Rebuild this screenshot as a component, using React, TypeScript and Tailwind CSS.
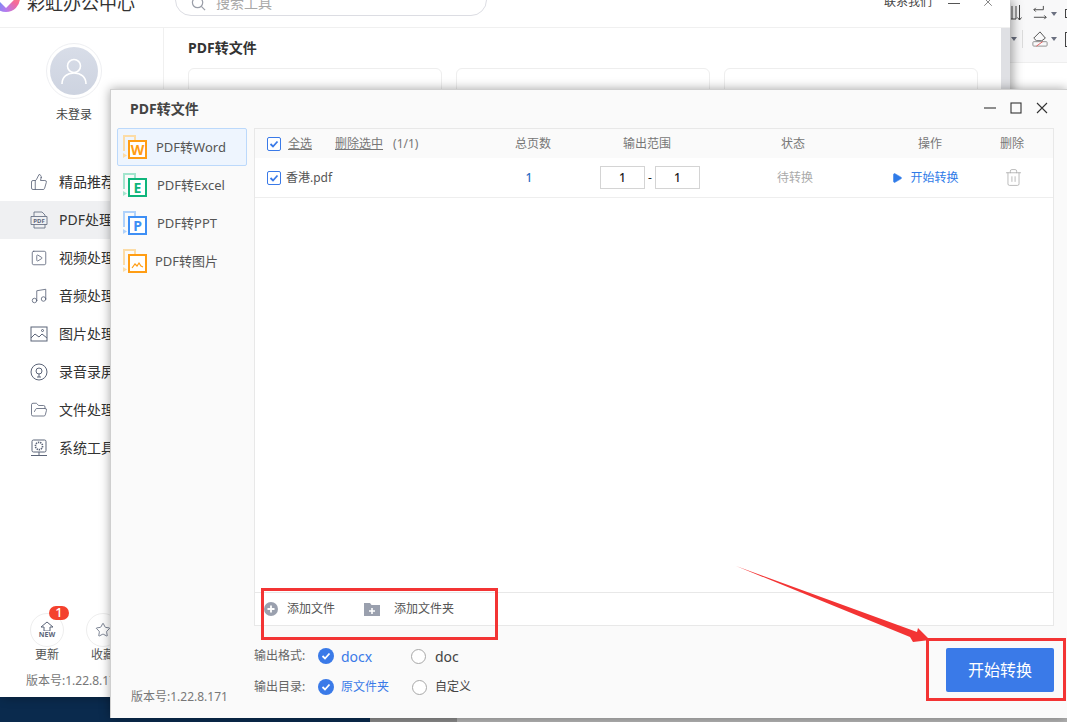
import { FolderOpen, Music, Play, SquarePlay, Star, ThumbsUp, Trash2, X } from "lucide-react";
import type { ReactNode } from "react";

const menuIcon = "h-[18px] w-[18px] text-[#5b6478]";

function PdfIcon() {
  return (
    <svg viewBox="0 0 18 18" className="h-[18px] w-[18px]" fill="none" stroke="#5b6478" strokeWidth="0.8">
      <path d="M4 5V1h8l3 3v1M1 5.500h16v8H1zM4 13.500V17h11v-3.500" />
      <text x="9" y="12" textAnchor="middle" fontSize="6" fontWeight="700" fill="#5b6478" stroke="none">
        PDF
      </text>
    </svg>
  );
}

function ImageIcon() {
  return (
    <svg viewBox="0 0 18 18" className="h-[18px] w-[18px]" fill="none" stroke="#5b6478" strokeWidth="1">
      <rect x="1" y="2" width="16" height="14" />
      <path d="M1 13l4-4 4 3 3-3 5 4" />
      <circle cx="12.500" cy="5.500" r="1" />
    </svg>
  );
}

function RecordIcon() {
  return (
    <svg viewBox="0 0 18 18" className="h-[18px] w-[18px]" fill="none" stroke="#5b6478" strokeWidth="1">
      <circle cx="9" cy="9" r="8" />
      <circle cx="9" cy="8" r="3" />
      <path d="M9 11v3M7 14h4" />
    </svg>
  );
}

function SystemIcon() {
  return (
    <svg viewBox="0 0 18 18" className="h-[18px] w-[18px]" fill="none" stroke="#5b6478" strokeWidth="1">
      <rect x="2" y="1" width="14" height="12" rx="1.500" />
      <circle cx="9" cy="7" r="3.600" strokeDasharray="1.400 0.800" strokeWidth="1.600" />
      <path d="M9 13v3M1 16.500h16" />
    </svg>
  );
}

const menu: { label: string; icon: ReactNode; active?: boolean }[] = [
  { label: "精品推荐", icon: <ThumbsUp className={menuIcon} strokeWidth={1.1} /> },
  { label: "PDF处理", icon: <PdfIcon />, active: true },
  { label: "视频处理", icon: <SquarePlay className={menuIcon} strokeWidth={1.1} /> },
  { label: "音频处理", icon: <Music className={menuIcon} strokeWidth={1.1} /> },
  { label: "图片处理", icon: <ImageIcon /> },
  { label: "录音录屏", icon: <RecordIcon /> },
  { label: "文件处理", icon: <FolderOpen className={menuIcon} strokeWidth={1.1} /> },
  { label: "系统工具", icon: <SystemIcon /> },
];

function DocIcon({ color, light, letter }: { color: string; light: string; letter?: string }) {
  return (
    <svg viewBox="0 0 24 24" className="h-6 w-6 shrink-0" fill="none">
      <path d="M1 16V1h11v5" stroke={light} strokeWidth="2" />
      <path d="M0 18l4 2.500L0 23z" fill={light} />
      <rect x="6" y="6" width="17" height="17" fill="#fff" stroke={color} strokeWidth="2" />
      {letter ? (
        <text x="14.500" y="20" textAnchor="middle" fontSize="14" fontWeight="700" fill={color}>
          {letter}
        </text>
      ) : (
        <path d="M9 19l3-4 2 2 2-3 2 3 2 1" stroke={color} strokeWidth="1.200" />
      )}
    </svg>
  );
}

const tabs = [
  { label: "PDF转Word", color: "#ff9d14", light: "#fcdca6", letter: "W", gap: "ml-[9px]", active: true },
  { label: "PDF转Excel", color: "#0fb57b", light: "#a3e5cd", letter: "E", gap: "ml-[10px]" },
  { label: "PDF转PPT", color: "#3e8ff5", light: "#b0d2fb", letter: "P", gap: "ml-[10px]" },
  { label: "PDF转图片", color: "#ff9d14", light: "#fcdca6", gap: "ml-2" },
];

function CheckBox() {
  return (
    <span className="flex h-[14px] w-[14px] shrink-0 items-center justify-center rounded-[2px] border border-[#3a7ae8] bg-white">
      <svg viewBox="0 0 12 12" className="h-3 w-3" fill="none" stroke="#3a7ae8" strokeWidth="1.800">
        <path d="M2.500 6l2.500 2.500 4.500-5" />
      </svg>
    </span>
  );
}

function RadioOn() {
  return (
    <span className="flex h-4 w-4 shrink-0 items-center justify-center rounded-full bg-[#3a7ae8]">
      <svg viewBox="0 0 12 12" className="h-3 w-3" fill="none" stroke="#fff" strokeWidth="1.800">
        <path d="M2.500 6l2.500 2.500 4.500-5" />
      </svg>
    </span>
  );
}

function RadioOff() {
  return <span className="h-[15px] w-[15px] shrink-0 rounded-full border border-[#a8a8a8] bg-white" />;
}

function RangeInput() {
  return (
    <span className="flex h-[23px] w-[45px] items-center justify-center border border-[#d4d4d4] bg-white text-[12px] font-medium text-[#222]">
      1
    </span>
  );
}

export default function App() {
  return (
    <div className="relative h-[722px] w-[1067px] overflow-hidden bg-[#06213f] font-['Noto_Sans','Noto_Sans_CJK_SC',sans-serif] text-[12px] text-[#444]">
      {/* back window + other app toolbar */}
      <div className="flex h-[697px]">
        <div className="relative z-10 flex h-full w-[1010px] shrink-0 flex-col bg-white shadow-[3px_0_10px_rgba(0,0,0,0.35)]">
          <header className="flex h-[28px] shrink-0 items-start overflow-hidden border-b border-[#f0f0f0]">
            <div className="-mt-[16px] -ml-[8px] flex h-7 w-7 shrink-0 items-center justify-center rounded-full bg-[conic-gradient(#ffd76a,#ff8d6e,#f46a9b,#b57bee,#6f8cf5,#f6a23c,#ffd76a)]">
              <span className="h-[14px] w-[14px] rotate-45 bg-white" />
            </div>
            <span className="-mt-[11px] ml-[7px] text-[18px] leading-[28px] text-[#333]">彩虹办公中心</span>
            <div className="-mt-[28px] ml-[40px] flex h-[44px] w-[312px] items-end gap-[10px] rounded-[16px] border border-[#dcdde3] pb-[2px] pl-[15px]">
              <svg viewBox="0 0 16 16" className="mb-[2px] h-[15px] w-[15px]" fill="none" stroke="#9a9ea8" strokeWidth="1.300">
                <circle cx="7" cy="7" r="5.500" />
                <path d="M11 11l4 4" />
              </svg>
              <span className="text-[14px] leading-5 text-[#a8a8a8]">搜索工具</span>
            </div>
            <span className="-mt-[6px] ml-auto text-[12px] leading-4 text-[#444]">联系我们</span>
            <svg viewBox="0 0 12 1" className="mt-[3px] ml-[16px] h-px w-3 shrink-0">
              <path d="M0 .5h12" stroke="#555" />
            </svg>
            <X className="-mt-[5px] mr-[15px] ml-[21px] h-[14px] w-[14px] text-[#555]" strokeWidth={1.2} />
          </header>

          <div className="flex min-h-0 flex-1">
            <aside className="flex w-[164px] shrink-0 flex-col border-r border-[#f0f0f0]">
              <div className="mt-[15px] ml-[46px] flex h-[56px] w-[56px] items-center justify-center rounded-full border border-[#eeeff2]">
                <div className="flex h-12 w-12 items-center justify-center rounded-full bg-gradient-to-b from-[#d8dde8] to-[#cdd3e0]">
                  <svg viewBox="0 0 28 28" className="h-7 w-7" fill="none" stroke="#fff" strokeWidth="1.600">
                    <circle cx="14" cy="9" r="6.500" />
                    <path d="M2 27c0-7 5-11 12-11s12 4 12 11" />
                  </svg>
                </div>
              </div>
              <div className="mt-2 w-[148px] text-center leading-4 text-[#444]">未登录</div>
              <nav className="mt-[40px] flex flex-col">
                {menu.map((m) => (
                  <div
                    key={m.label}
                    className={`flex h-[38px] items-center gap-[11px] pb-px pl-[30px] text-[14px] text-[#333] ${m.active ? "bg-[#eff0f2]" : ""}`}
                  >
                    <span className="flex w-[18px] justify-center">{m.icon}</span>
                    <span className="whitespace-nowrap">{m.label}</span>
                  </div>
                ))}
              </nav>
              <div className="mt-auto flex pl-[30px]">
                <div className="flex w-[34px] flex-col items-center">
                  <div className="relative flex h-[34px] w-[34px] flex-col items-center justify-center rounded-full border border-[#eeeeee]">
                    <svg viewBox="0 0 16 10" className="h-[10px] w-4" fill="none" stroke="#5b6478" strokeWidth="1">
                      <path d="M8 1L2 6h3v4h6V6h3z" />
                    </svg>
                    <span className="text-[7px] leading-[8px] font-bold text-[#5b6478]">NEW</span>
                    <span className="absolute -top-[8px] left-[18px] flex h-[14px] w-5 items-center justify-center rounded-full bg-[#f4412e] text-[13px] font-medium text-white">
                      1
                    </span>
                  </div>
                  <span className="leading-4 text-[#555]">更新</span>
                </div>
                <div className="ml-[22px] flex w-[34px] flex-col items-center">
                  <div className="flex h-[34px] w-[34px] items-center justify-center rounded-full border border-[#eeeeee]">
                    <Star className="h-4 w-4 text-[#5b6478]" strokeWidth={1.2} />
                  </div>
                  <span className="leading-4 whitespace-nowrap text-[#555]">收藏</span>
                </div>
              </div>
              <div className="mt-[10px] mb-[8px] pl-[26px] leading-4 whitespace-nowrap text-[#777]">版本号:1.22.8.171</div>
            </aside>
            <main className="min-w-0 flex-1 pt-[10px] pl-[24px]">
              <h2 className="text-[14px] leading-5 font-bold text-[#333]">PDF转文件</h2>
              <div className="mt-[10px] flex gap-[14px]">
                <div className="h-[200px] w-[254px] rounded-[6px] border border-[#eeeeee]" />
                <div className="h-[200px] w-[254px] rounded-[6px] border border-[#eeeeee]" />
                <div className="h-[200px] w-[254px] rounded-[6px] border border-[#eeeeee]" />
              </div>
            </main>
            <div className="w-[9px] shrink-0 bg-[#dfe0e4]" />
          </div>
        </div>

        <div className="flex-1 overflow-hidden bg-white">
          <div className="h-[63px] w-[80px] border-b border-[#eeeeee] bg-[#f8f8f9]">
            <div className="flex h-[24px] items-end">
              <svg viewBox="0 0 12 18" className="mb-[2px] h-[18px] w-3 shrink-0" fill="none" stroke="#444" strokeWidth="1">
                <path d="M2 2v13M6 2v13h-5M9.500 1v15M7.500 13.500l2 2.500 2-2.500" />
              </svg>
              <svg viewBox="0 0 18 18" className="mb-[2px] ml-[10px] h-[17px] w-[17px] shrink-0" fill="none" stroke="#444" strokeWidth="1">
                <path d="M12 1v4H2M4 3L2 5l2 2M2 13h13M13 11l2 2-2 2" />
              </svg>
              <span className="mb-[8px] ml-[2px] h-0 w-0 border-x-[3px] border-t-[4px] border-x-transparent border-t-[#6b7080]" />
              <span className="mb-[6px] ml-[8px] h-[9px] w-[10px] shrink-0 border border-[#444]" />
            </div>
            <div className="mt-[6px] flex items-center">
              <span className="ml-[1px] h-0 w-0 border-x-[3px] border-t-[4px] border-x-transparent border-t-[#6b7080]" />
              <span className="ml-[5px] h-[18px] w-px bg-[#dddddd]" />
              <svg viewBox="0 0 18 18" className="ml-[9px] h-[16px] w-[16px] shrink-0" fill="none" stroke="#444" strokeWidth="1">
                <path d="M2 8l7-7 6 7-4 3H5z" />
                <rect x="1" y="12" width="16" height="5" rx="1" stroke="#888" />
                <path d="M5 17l7-5" stroke="#e45050" />
              </svg>
              <span className="ml-[3px] h-0 w-0 border-x-[3px] border-t-[4px] border-x-transparent border-t-[#6b7080]" />
              <span className="ml-[8px] h-[15px] w-[10px] shrink-0 border border-[#444]" />
            </div>
          </div>
        </div>
      </div>

      {/* strip under the windows */}
      <div className="flex h-[25px]">
        <div className="w-[370px] bg-[#0a2a4d]" />
        <div className="w-[87px] bg-[#8a8a8a]" />
        <div className="flex-1 bg-[#b4b4b4]" />
      </div>

      {/* dialog */}
      <div className="absolute top-[89px] left-[110px] z-20 flex h-[629px] w-[957px] flex-col border-t border-l border-[#cfcfcf] bg-[#fafafa] shadow-[0_0_10px_rgba(0,0,0,0.35)]">
        <div className="flex h-[38px] shrink-0 items-center pb-[2px] pl-[19px]">
          <span className="text-[14px] font-bold text-[#444]">PDF转文件</span>
          <div className="ml-auto flex items-center gap-[14px] pr-[19px]">
            <svg viewBox="0 0 12 12" className="h-3 w-3" fill="none" stroke="#333" strokeWidth="1.100">
              <path d="M0 6h12" />
            </svg>
            <svg viewBox="0 0 12 12" className="h-3 w-3" fill="none" stroke="#333" strokeWidth="1.100">
              <rect x="1" y="1" width="10" height="10" />
            </svg>
            <svg viewBox="0 0 12 12" className="h-3 w-3" fill="none" stroke="#333" strokeWidth="1.100">
              <path d="M1 1l10 10M11 1L1 11" />
            </svg>
          </div>
        </div>

        <div className="flex h-[498px] shrink-0">
          <div className="w-[143px] shrink-0 pl-[6px]">
            {tabs.map((t) => (
              <div
                key={t.label}
                className={`flex h-[38px] w-[130px] items-center rounded-[2px] border pl-[5px] text-[13px] text-[#555] ${t.active ? "border-[#bcd9fb] bg-[#eef5fe]" : "border-transparent"}`}
              >
                <DocIcon color={t.color} light={t.light} letter={t.letter} />
                <span className={`${t.gap} pt-px whitespace-nowrap`}>{t.label}</span>
              </div>
            ))}
          </div>
          <section className="flex w-[800px] shrink-0 flex-col border border-[#e8e8e8] bg-white">
            <div className="grid h-[29px] shrink-0 grid-cols-[243px_70px_158px_134px_140px_24px] items-center bg-[#fafafa] text-[#777]">
              <div className="flex items-center pl-[12px]">
                <CheckBox />
                <span className="ml-[7px] underline">全选</span>
                <span className="ml-[23px] underline">删除选中</span>
                <span className="ml-[10px]">(1/1)</span>
              </div>
              <span className="text-center">总页数</span>
              <span className="text-center">输出范围</span>
              <span className="text-center">状态</span>
              <span className="text-center">操作</span>
              <span className="text-center">删除</span>
            </div>
            <div className="grid h-[40px] shrink-0 grid-cols-[243px_70px_158px_134px_140px_24px] items-center border-b border-[#eeeeee]">
              <div className="flex items-center pl-[12px]">
                <CheckBox />
                <span className="ml-[5px] text-[#555]">香港.pdf</span>
              </div>
              <span className="pr-[8px] text-center font-medium text-[#2f6fc4]">1</span>
              <div className="flex items-center justify-center pl-[6px] text-[#222]">
                <RangeInput />
                <span className="w-[10px] text-center">-</span>
                <RangeInput />
              </div>
              <span className="pl-[4px] text-center text-[#aaaaaa]">待转换</span>
              <div className="flex items-center justify-center gap-[7px] pr-[10px] text-[#2f7be8]">
                <Play className="h-[12px] w-[12px] fill-[#2f7be8]" strokeWidth={1} />
                <span>开始转换</span>
              </div>
              <div className="flex justify-center pl-[2px]">
                <Trash2 className="h-[19px] w-[19px] text-[#aaaaaa]" strokeWidth={1} />
              </div>
            </div>
            <div className="flex-1" />
            <div className="flex h-[33px] shrink-0 items-center border-t border-[#e8e8e8] pl-[9px] text-[#555]">
              <svg viewBox="0 0 14 14" className="h-[14px] w-[14px]">
                <circle cx="7" cy="7" r="7" fill="#9aa0ae" />
                <path d="M7 3.500v7M3.500 7h7" stroke="#fff" strokeWidth="1.800" />
              </svg>
              <span className="ml-[9px]">添加文件</span>
              <svg viewBox="0 0 16 14" className="ml-[29px] h-[14px] w-4">
                <path d="M0 1h6l1.500 2H16v11H0z" fill="#9aa0ae" />
                <path d="M8 6v6M5 9h6" stroke="#fff" strokeWidth="1.600" />
              </svg>
              <span className="ml-[14px]">添加文件夹</span>
            </div>
          </section>
        </div>

        <div className="flex min-h-0 flex-1">
          <div className="w-[143px] shrink-0 self-end pb-[13px] pl-[20px] leading-4 whitespace-nowrap text-[#777]">版本号:1.22.8.171</div>
          <div className="flex flex-col gap-[11px] pt-[20px]">
            <div className="flex h-5 items-center">
              <span className="w-[64px] text-[#666]">输出格式:</span>
              <RadioOn />
              <span className="ml-[7px] w-[70px] text-[14px] text-[#3a7ae8]">docx</span>
              <RadioOff />
              <span className="ml-[9px] text-[14px] text-[#444]">doc</span>
            </div>
            <div className="flex h-5 items-center">
              <span className="w-[64px] text-[#666]">输出目录:</span>
              <RadioOn />
              <span className="ml-[7px] w-[71px] text-[#3a7ae8]">原文件夹</span>
              <RadioOff />
              <span className="ml-[8px] text-[#444]">自定义</span>
            </div>
          </div>
          <button className="mt-[22px] mr-[13px] ml-auto flex h-[44px] w-[108px] items-center justify-center rounded-[2px] bg-[#3a7ae8] text-[16px] text-white">
            开始转换
          </button>
        </div>
      </div>

      {/* annotations */}
      <div className="absolute top-[588px] left-[261px] z-30 h-[52px] w-[237px] border-[3px] border-[#f33434]" />
      <div className="absolute top-[638px] left-[926px] z-30 h-[63px] w-[140px] border-[3px] border-[#f33434]" />
      <svg className="absolute top-[560px] left-[730px] z-30 h-[90px] w-[210px]" viewBox="730 560 210 90">
        <polygon points="736,566 917,632 918,628 930,640 913,642 910,637" fill="#f33434" />
      </svg>
    </div>
  );
}
